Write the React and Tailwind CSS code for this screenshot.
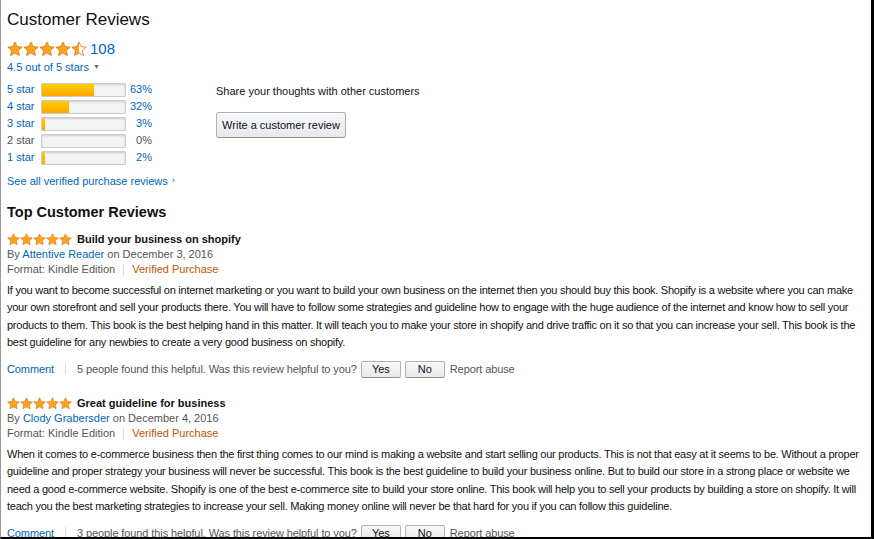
const font = { fontFamily: '"Liberation Sans", Arial, sans-serif' };

const Star = ({ size = 15, half = false, id }) => (
  <svg width={size} height={size} viewBox="0 0 24 24" className="shrink-0">
    {half && (
      <defs>
        <linearGradient id={id}>
          <stop offset="50%" stopColor="#ffa41c" />
          <stop offset="50%" stopColor="#ffffff" />
        </linearGradient>
      </defs>
    )}
    <path
      d="M12 1.5l3.2 6.9 7.5.8-5.6 5.1 1.6 7.4L12 17.9l-6.7 3.8 1.6-7.4L1.3 9.2l7.5-.8z"
      fill={half ? `url(#${id})` : "#ffa41c"}
      stroke="#de7921"
      strokeWidth="1.3"
      strokeLinejoin="round"
    />
  </svg>
);

const Stars = ({ size, half }) => (
  <div className="flex items-center">
    {[0, 1, 2, 3, 4].map((i) => (
      <Star key={i} size={size} half={half && i === 4} id={`half-${i}`} />
    ))}
  </div>
);

const bars = [
  { label: "5 star", pct: 63, link: true },
  { label: "4 star", pct: 32, link: true },
  { label: "3 star", pct: 3, link: true },
  { label: "2 star", pct: 0, link: false },
  { label: "1 star", pct: 2, link: true },
];

const reviews = [
  {
    title: "Build your business on shopify",
    author: "Attentive Reader",
    date: "December 3, 2016",
    helpful: 5,
    body:
      "If you want to become successful on internet marketing or you want to build your own business on the internet then you should buy this book. Shopify is a website where you can make your own storefront and sell your products there. You will have to follow some strategies and guideline how to engage with the huge audience of the internet and know how to sell your products to them. This book is the best helping hand in this matter. It will teach you to make your store in shopify and drive traffic on it so that you can increase your sell. This book is the best guideline for any newbies to create a very good business on shopify.",
  },
  {
    title: "Great guideline for business",
    author: "Clody Grabersder",
    date: "December 4, 2016",
    helpful: 3,
    body:
      "When it comes to e-commerce business then the first thing comes to our mind is making a website and start selling our products. This is not that easy at it seems to be. Without a proper guideline and proper strategy your business will never be successful. This book is the best guideline to build your business online. But to build our store in a strong place or website we need a good e-commerce website. Shopify is one of the best e-commerce site to build your store online. This book will help you to sell your products by building a store on shopify. It will teach you the best marketing strategies to increase your sell. Making money online will never be that hard for you if you can follow this guideline.",
  },
];

const SmallButton = ({ children }) => (
  <button className="h-[17px] w-[40px] rounded-[2px] border border-[#adb1b8] border-b-[#8d9096] bg-gradient-to-b from-[#f7f8fa] to-[#e7e9ec] text-[11px] leading-[15px] text-[#111]">
    {children}
  </button>
);

const Review = ({ r }) => (
  <div>
    <div className="flex h-[16px] items-center gap-[5px]">
      <Stars size={13} />
      <span className="text-[11px] font-bold text-[#111]">{r.title}</span>
    </div>
    <div className="h-[15px] text-[11px] leading-[15px] text-[#555]">
      By <span className="text-[#0066c0]">{r.author}</span> on {r.date}
    </div>
    <div className="flex h-[15px] items-center text-[11px] leading-[15px] text-[#555]">
      <span>Format: Kindle Edition</span>
      <span className="mx-[8px] h-[12px] w-px bg-[#ddd]" />
      <span className="text-[#c45500]">Verified Purchase</span>
    </div>
    <p className="mt-[5px] text-[11px] leading-[17.3px] tracking-[-0.25px] text-[#111]">{r.body}</p>
    <div className="mt-[9px] flex h-[18px] items-center text-[11px] tracking-[-0.1px] text-[#555]">
      <span className="text-[#0066c0]">Comment</span>
      <span className="mx-[11px] h-[12px] w-px bg-[#ddd]" />
      <span>{r.helpful} people found this helpful. Was this review helpful to you?</span>
      <span className="ml-[4px] flex gap-[4px]">
        <SmallButton>Yes</SmallButton>
        <SmallButton>No</SmallButton>
      </span>
      <span className="ml-[5px]">Report abuse</span>
    </div>
  </div>
);

export default function App() {
  return (
    <div
      style={font}
      className="h-[539px] w-[874px] overflow-hidden border-b-2 border-l border-r-[3px] border-b-black border-l-[#999] border-r-black bg-white"
    >
      <div className="pl-[6px] pt-[10px]">
        <h1 className="text-[17px] leading-[20px] text-[#111]">Customer Reviews</h1>

        <div className="mt-[10px] flex h-[18px] items-center gap-[3px]">
          <Stars size={16} half />
          <span className="text-[15px] text-[#0066c0]">108</span>
        </div>
        <div className="mt-[2px] flex h-[14px] items-center text-[11px] text-[#0066c0]">
          4.5 out of 5 stars
          <span className="ml-[4px] text-[7px] text-[#666]">▼</span>
        </div>

        <div className="mt-[7px] flex">
          <div className="w-[209px]">
            {bars.map((b) => (
              <div key={b.label} className="flex h-[17px] items-center text-[11px]">
                <span className={`w-[34px] ${b.link ? "text-[#0066c0]" : "text-[#555]"}`}>{b.label}</span>
                <div className="h-[14px] w-[85px] overflow-hidden rounded-[1px] border border-[#ccc] bg-[#f3f3f3] shadow-[inset_0_1px_2px_rgba(0,0,0,0.15)]">
                  <div
                    className="h-full bg-gradient-to-b from-[#ffce00] to-[#ffa700]"
                    style={{ width: `${b.pct === 0 ? 0 : Math.max(b.pct, 4)}%` }}
                  />
                </div>
                <span className={`w-[26px] text-right ${b.link ? "text-[#0066c0]" : "text-[#555]"}`}>{b.pct}%</span>
              </div>
            ))}
          </div>
          <div className="pt-[3px]">
            <div className="text-[11px] leading-[14px] text-[#111]">Share your thoughts with other customers</div>
            <button className="mt-[14px] h-[26px] w-[130px] rounded-[3px] border border-[#adb1b8] border-b-[#8d9096] bg-gradient-to-b from-[#f7f8fa] to-[#e7e9ec] text-[11px] text-[#111]">
              Write a customer review
            </button>
          </div>
        </div>

        <div className="mt-[8px] flex h-[14px] items-center text-[11px] text-[#0066c0]">
          See all verified purchase reviews
          <span className="ml-[4px] text-[9px]">›</span>
        </div>

        <h2 className="mt-[15px] text-[14.5px] font-bold leading-[18px] text-[#111]">Top Customer Reviews</h2>

        <div className="mt-[10px] flex flex-col gap-[17px]">
          {reviews.map((r) => (
            <Review key={r.title} r={r} />
          ))}
        </div>
      </div>
    </div>
  );
}
